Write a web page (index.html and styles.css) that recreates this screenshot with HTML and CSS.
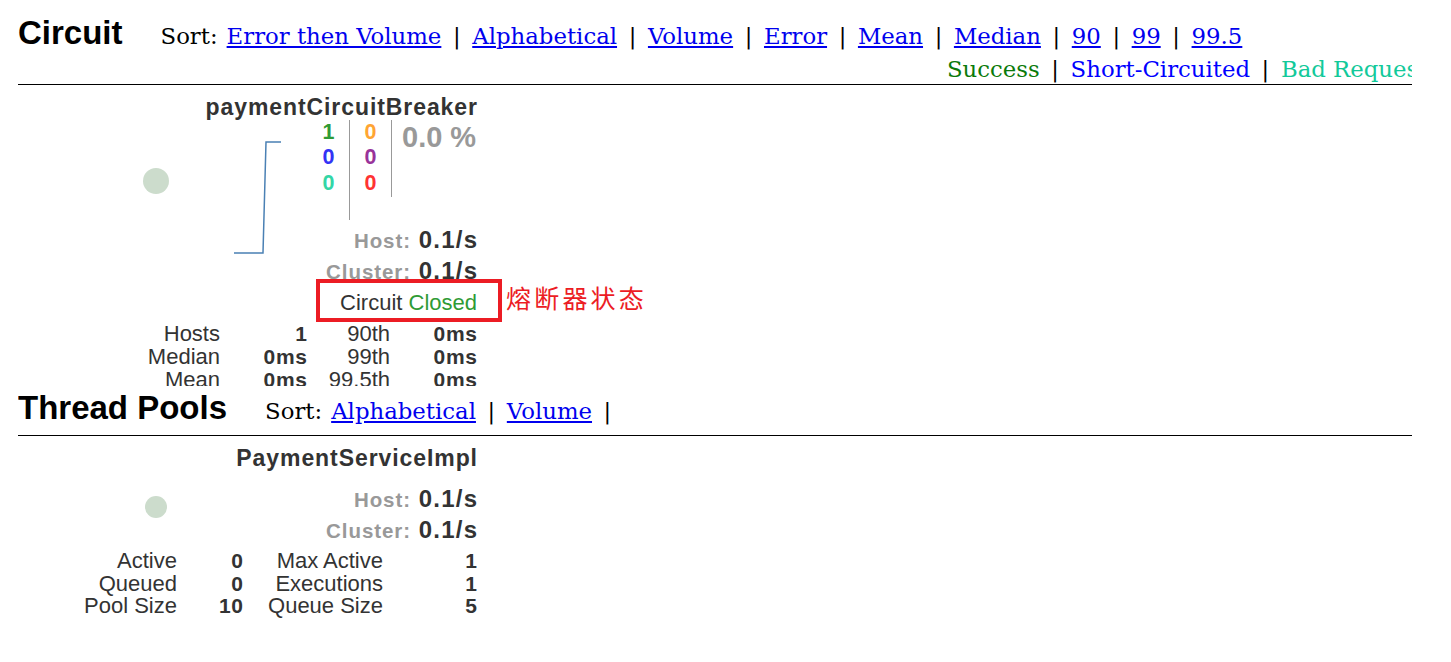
FILE: index.html
```html
<!DOCTYPE html>
<html lang="en">
<head>
<meta charset="utf-8">
<title>Hystrix Stream</title>
<link rel="stylesheet" href="styles.css">
</head>
<body>
<div class="page">
  <section class="menubar circuit-bar">
    <div class="menu-top">
      <h2 class="title">Circuit</h2>
      <div class="menu-actions"><span class="sort-label">Sort:</span><a href="#">Error then Volume</a><span class="sep">|</span><a href="#">Alphabetical</a><span class="sep">|</span><a href="#">Volume</a><span class="sep">|</span><a href="#">Error</a><span class="sep">|</span><a href="#">Mean</a><span class="sep">|</span><a href="#">Median</a><span class="sep">|</span><a href="#">90</a><span class="sep">|</span><a href="#">99</a><span class="sep">|</span><a href="#">99.5</a></div>
    </div>
    <div class="menu-legend"><span class="lg-success">Success</span><span class="sep">|</span><span class="lg-short">Short-Circuited</span><span class="sep">|</span><span class="lg-bad">Bad Request</span><span class="sep">|</span><span class="lg-timeout">Timeout</span><span class="sep">|</span><span class="lg-rejected">Rejected</span><span class="sep">|</span><span class="lg-failure">Failure</span><span class="sep">|</span><span class="lg-error">Error %</span></div>
  </section>

  <section class="monitor circuit-monitor">
    <svg class="chart chart-circuit" width="300" height="200" viewBox="0 0 300 200">
      <circle cx="138" cy="96" r="13" fill="#ccdccc"/>
      <path d="M216 168 H245 L248 57 H263" fill="none" stroke="#4a80b4" stroke-width="1.5"/>
    </svg>
    <div class="name">paymentCircuitBreaker</div>
    <div class="counters">
      <div class="cell cell-a">
        <div class="c-success">1</div>
        <div class="c-short">0</div>
        <div class="c-bad">0</div>
      </div>
      <div class="cell cell-b">
        <div class="c-timeout">0</div>
        <div class="c-rejected">0</div>
        <div class="c-failure">0</div>
      </div>
      <div class="cell cell-c">0.0 %</div>
    </div>
    <div class="rate"><span class="rate-label">Host:</span> 0.1/s</div>
    <div class="rate"><span class="rate-label">Cluster:</span> 0.1/s</div>
    <div class="status">Circuit <span class="closed">Closed</span></div>
    <div class="stats stats-circuit">
      <span class="lbl">Hosts</span><span class="val">1</span><span class="lbl">90th</span><span class="val">0ms</span>
      <span class="lbl">Median</span><span class="val">0ms</span><span class="lbl">99th</span><span class="val">0ms</span>
      <span class="lbl">Mean</span><span class="val">0ms</span><span class="lbl">99.5th</span><span class="val">0ms</span>
    </div>
    <div class="annot"><span class="annot-note">熔断器状态</span></div>
  </section>

  <section class="menubar pools-bar">
    <div class="menu-top">
      <h2 class="title">Thread Pools</h2>
      <div class="menu-actions"><span class="sort-label">Sort:</span><a href="#">Alphabetical</a><span class="sep">|</span><a href="#">Volume</a><span class="sep">|</span></div>
    </div>
  </section>

  <section class="monitor pool-monitor">
    <svg class="chart chart-pool" width="300" height="120" viewBox="0 0 300 120">
      <circle cx="138" cy="71" r="11" fill="#ccdccc"/>
    </svg>
    <div class="name">PaymentServiceImpl</div>
    <div class="rate pool-host"><span class="rate-label">Host:</span> 0.1/s</div>
    <div class="rate"><span class="rate-label">Cluster:</span> 0.1/s</div>
    <div class="stats stats-pool">
      <span class="lbl">Active</span><span class="val">0</span><span class="lbl">Max Active</span><span class="val">1</span>
      <span class="lbl">Queued</span><span class="val">0</span><span class="lbl">Executions</span><span class="val">1</span>
      <span class="lbl">Pool Size</span><span class="val">10</span><span class="lbl">Queue Size</span><span class="val">5</span>
    </div>
  </section>
</div>
</body>
</html>
```

FILE: styles.css
```css
* { box-sizing: border-box; }

body {
  margin: 0;
  background: #fff;
  color: #000;
  font-family: "Liberation Sans", Arial, sans-serif;
}

.page {
  padding-left: 18px;
  width: 1412px;
}

/* ---------- menu bars ---------- */
.menubar {
  border-bottom: 1px solid #000;
  overflow: hidden;
  white-space: nowrap;
}
.circuit-bar { padding-top: 12.5px; padding-bottom: 2px; }
.pools-bar { padding-top: 2.5px; padding-bottom: 4px; }

.menu-top {
  display: flex;
  align-items: baseline;
}
.title {
  margin: 0;
  font: bold 33px/40px "Liberation Sans", Arial, sans-serif;
  color: #000;
}
.menu-actions {
  margin-left: 38px;
  font: 22.8px/40px "DejaVu Serif", serif;
  color: #000;
}
.menu-actions a { color: #0000ee; text-decoration: underline; }
.sort-label { margin-right: 9px; }
.sep { padding: 0 11.6px; color: #000; }

.menu-legend {
  padding-left: 929px;
  font: 22.8px/26px "DejaVu Serif", serif;
}
.lg-success { color: #0a7a0a; }
.lg-short { color: #0000ff; }
.lg-bad { color: #12c99a; }
.lg-timeout { color: #ff9900; }
.lg-rejected { color: #993399; }
.lg-failure { color: #ff0000; }
.lg-error { color: #999; }

/* ---------- monitor cards ---------- */
.monitor {
  position: relative;
  width: 459px;
  padding-top: 9px;
  color: #333;
}
.circuit-monitor {
  height: 301px;
  overflow-x: visible;
  overflow-y: clip;
}
.pool-monitor { padding-bottom: 30px; }

.chart {
  position: absolute;
  left: 0;
  top: 0;
}

.name {
  position: relative;
  margin-right: -0.04em;
  font: bold 23px/26px "Liberation Sans", Arial, sans-serif;
  letter-spacing: 0.04em;
  text-align: right;
  color: #333;
}

.counters {
  position: relative;
  display: flex;
  justify-content: flex-end;
  font: bold 21.5px/25.8px "Liberation Sans", Arial, sans-serif;
}
.cell { text-align: center; }
.cell-a { width: 42px; height: 100px; border-right: 1px solid #999; }
.cell-b { width: 42px; height: 77px; border-right: 1px solid #999; }
.cell-c {
  width: 85px;
  padding: 2px 0 0 10px;
  text-align: left;
  font: bold 29px/30px "Liberation Sans", Arial, sans-serif;
  color: #999;
}
.c-success { color: #2f9b35; }
.c-short { color: #3333f5; }
.c-bad { color: #33d6a6; }
.c-timeout { color: #ffa533; }
.c-rejected { color: #993399; }
.c-failure { color: #ff3333; }

.rate {
  position: relative;
  margin-top: 4.5px;
  margin-right: -0.05em;
  font: bold 24px/31px "Liberation Sans", Arial, sans-serif;
  letter-spacing: 0.05em;
  text-align: right;
  color: #333;
}
.rate + .rate { margin-top: 0; }
.pool-host { margin-top: 11.5px; }
.rate-label {
  font-size: 20.5px;
  letter-spacing: 0.045em;
  line-height: 1;
  color: #999;
}

.status {
  position: relative;
  font: 22px/33px "Liberation Sans", Arial, sans-serif;
  text-align: right;
  color: #333;
}
.closed { color: #2f9b35; }

.stats {
  position: relative;
  display: grid;
  align-items: baseline;
  font: 22px/23px "Liberation Sans", Arial, sans-serif;
  color: #333;
}
.stats-circuit {
  margin-top: 2.5px;
  grid-template-columns: 1fr 87px 83px 87px;
}
.stats-pool {
  margin-top: 5.5px;
  grid-template-columns: 1fr 66px 140px 94px;
  line-height: 22.5px;
}
.lbl { text-align: right; }
.val {
  text-align: right;
  font-weight: bold;
  font-size: 21px;
  letter-spacing: 0.035em;
  margin-right: -0.035em;
}

/* ---------- annotation overlay ---------- */
.annot {
  position: absolute;
  left: 298px;
  top: 194px;
  width: 186px;
  height: 43px;
  border: 4px solid #ec1c24;
}
.annot-note {
  position: absolute;
  left: calc(100% + 8px);
  top: 2px;
  font: 25px/25px "Noto Sans CJK SC", sans-serif;
  letter-spacing: 3.2px;
  color: #ec1c24;
  white-space: nowrap;
}
```
